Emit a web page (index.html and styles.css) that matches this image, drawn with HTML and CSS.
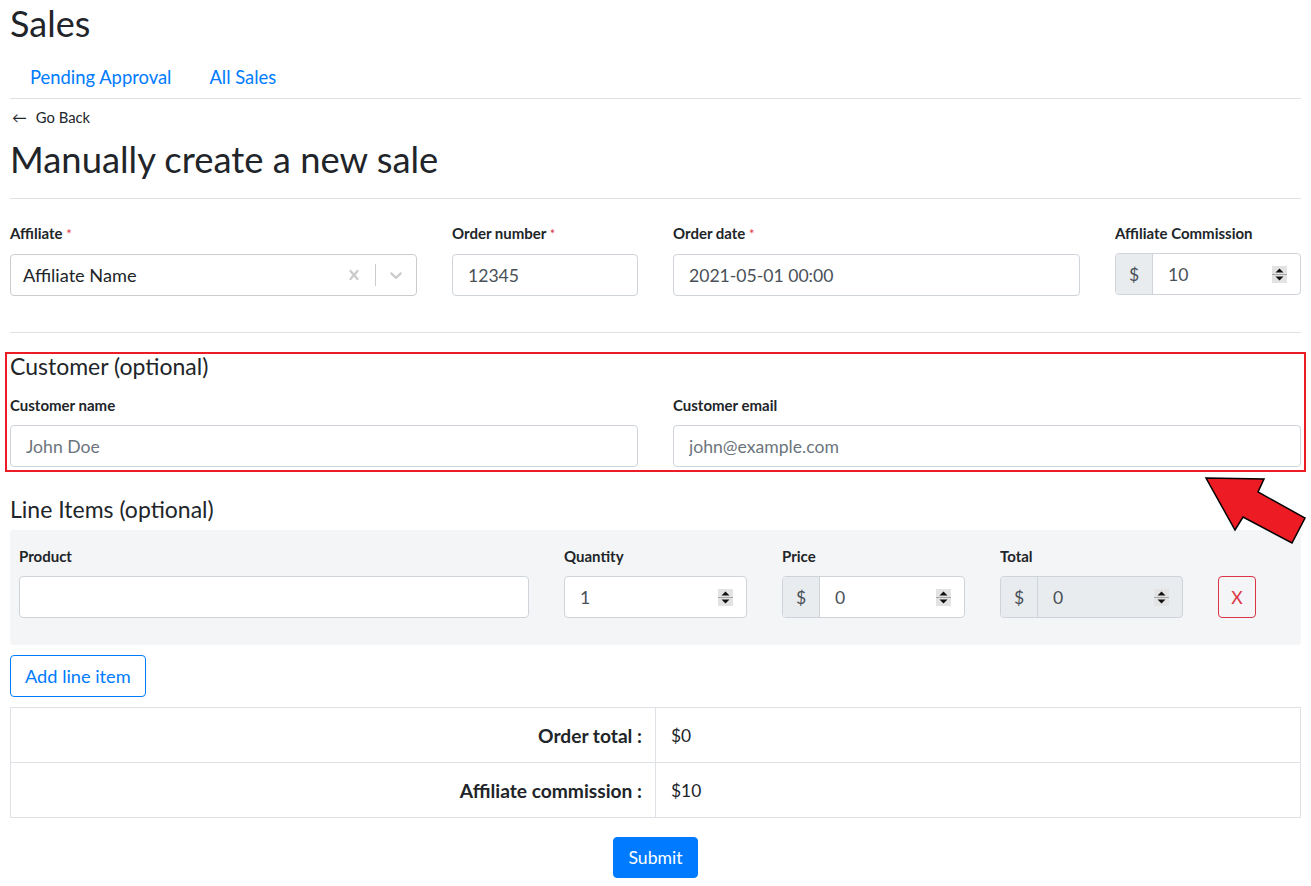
FILE: index.html
```html
<!DOCTYPE html>
<html lang="en">
<head>
<meta charset="utf-8">
<title>Sales</title>
<link rel="stylesheet" href="styles.css">
</head>
<body>
<h1 class="page-title">Sales</h1>
<nav class="tabs">
  <a class="tab" href="#">Pending Approval</a>
  <a class="tab" href="#">All Sales</a>
</nav>
<a class="back" href="#"><span class="back-arrow">&larr;</span>Go Back</a>
<h2 class="form-title">Manually create a new sale</h2>
<hr class="rule rule-top">

<div class="grid-top">
  <div class="field">
    <label class="lbl">Affiliate <span class="req">*</span></label>
    <div class="select">
      <span class="select-value">Affiliate Name</span>
      <span class="ind ind-clear">
        <svg width="20" height="20" viewBox="0 0 20 20"><path fill="#cccccc" d="M14.348 14.849c-0.469 0.469-1.229 0.469-1.697 0l-2.651-3.030-2.651 3.029c-0.469 0.469-1.229 0.469-1.697 0-0.469-0.469-0.469-1.229 0-1.697l2.758-3.15-2.759-3.152c-0.469-0.469-0.469-1.228 0-1.697s1.228-0.469 1.697 0l2.652 3.031 2.651-3.031c0.469-0.469 1.228-0.469 1.697 0s0.469 1.229 0 1.697l-2.758 3.152 2.758 3.15c0.469 0.469 0.469 1.229 0 1.698z"/></svg>
      </span>
      <span class="sep"></span>
      <span class="ind ind-drop">
        <svg width="20" height="20" viewBox="0 0 20 20"><path fill="#cccccc" d="M4.516 7.548c0.436-0.446 1.043-0.481 1.576 0l3.908 3.747 3.908-3.747c0.533-0.481 1.141-0.446 1.574 0 0.436 0.445 0.408 1.197 0 1.615-0.406 0.418-4.695 4.502-4.695 4.502-0.217 0.223-0.502 0.335-0.787 0.335s-0.57-0.112-0.789-0.335c0 0-4.287-4.084-4.695-4.502s-0.436-1.170 0-1.615z"/></svg>
      </span>
    </div>
  </div>
  <div class="field">
    <label class="lbl">Order number <span class="req">*</span></label>
    <input class="input" type="text" value="12345">
  </div>
  <div class="field">
    <label class="lbl">Order date <span class="req">*</span></label>
    <input class="input" type="text" value="2021-05-01 00:00">
  </div>
  <div class="field">
    <label class="lbl">Affiliate Commission</label>
    <div class="group">
      <span class="addon">$</span>
      <input class="bare" type="text" value="10">
      <svg class="spin" width="15" height="17" viewBox="0 0 15 17"><rect x="0" y="0" width="15" height="17" fill="#e3e3e3"/><rect x="0" y="8" width="15" height="1" fill="#a6a6a6"/><polygon points="3.5,6.5 11.5,6.5 7.5,2.5" fill="#111"/><polygon points="3.5,10.5 11.5,10.5 7.5,14.5" fill="#111"/></svg>
    </div>
  </div>
</div>

<hr class="rule rule-mid">

<section class="customer">
  <h3 class="section-title">Customer (optional)</h3>
  <div class="grid-two">
    <div class="field">
      <label class="lbl">Customer name</label>
      <input class="input" type="text" placeholder="John Doe">
    </div>
    <div class="field">
      <label class="lbl">Customer email</label>
      <input class="input" type="text" placeholder="john@example.com">
    </div>
  </div>
</section>

<h3 class="section-title items-title">Line Items (optional)</h3>
<div class="items">
  <div class="field">
    <label class="lbl">Product</label>
    <input class="input" type="text">
  </div>
  <div class="field">
    <label class="lbl">Quantity</label>
    <div class="group">
      <input class="bare" type="text" value="1">
      <svg class="spin" width="15" height="17" viewBox="0 0 15 17"><rect x="0" y="0" width="15" height="17" fill="#e3e3e3"/><rect x="0" y="8" width="15" height="1" fill="#a6a6a6"/><polygon points="3.5,6.5 11.5,6.5 7.5,2.5" fill="#111"/><polygon points="3.5,10.5 11.5,10.5 7.5,14.5" fill="#111"/></svg>
    </div>
  </div>
  <div class="field">
    <label class="lbl">Price</label>
    <div class="group">
      <span class="addon">$</span>
      <input class="bare" type="text" value="0">
      <svg class="spin" width="15" height="17" viewBox="0 0 15 17"><rect x="0" y="0" width="15" height="17" fill="#e3e3e3"/><rect x="0" y="8" width="15" height="1" fill="#a6a6a6"/><polygon points="3.5,6.5 11.5,6.5 7.5,2.5" fill="#111"/><polygon points="3.5,10.5 11.5,10.5 7.5,14.5" fill="#111"/></svg>
    </div>
  </div>
  <div class="field">
    <label class="lbl">Total</label>
    <div class="group disabled">
      <span class="addon">$</span>
      <input class="bare" type="text" value="0" disabled>
      <svg class="spin" width="15" height="17" viewBox="0 0 15 17"><rect x="0" y="0" width="15" height="17" fill="#e3e3e3"/><rect x="0" y="8" width="15" height="1" fill="#a6a6a6"/><polygon points="3.5,6.5 11.5,6.5 7.5,2.5" fill="#111"/><polygon points="3.5,10.5 11.5,10.5 7.5,14.5" fill="#111"/></svg>
    </div>
  </div>
  <div class="field field-end">
    <button class="btn-remove" type="button">X</button>
  </div>
</div>

<button class="btn-outline" type="button">Add line item</button>

<table class="totals">
  <tr>
    <th class="t-label">Order total :</th>
    <td class="t-value">$0</td>
  </tr>
  <tr>
    <th class="t-label">Affiliate commission :</th>
    <td class="t-value">$10</td>
  </tr>
</table>

<div class="submit-row">
  <button class="btn-primary" type="submit">Submit</button>
</div>

<svg class="arrow" width="112" height="80" viewBox="0 0 112 80">
  <polygon points="6,6 64,7 58,20 105,46 92,71 43,45 35,58" fill="#ed1c24" stroke="#000" stroke-width="1.5" stroke-linejoin="miter"/>
</svg>
</body>
</html>
```

FILE: styles.css
```css
* { box-sizing: border-box; }

body {
  margin: 0;
  padding: 0 10px;
  position: relative;
  font-family: Lato, "Open Sans", sans-serif;
  color: #212529;
  background: #fff;
}

.page-title {
  margin: 0;
  padding-top: 2px;
  font-size: 36px;
  line-height: 43px;
  font-weight: 400;
}

.tabs {
  display: flex;
  margin-top: 13px;
  border-bottom: 1px solid #dee2e6;
}

.tab {
  padding: 7px 18px 9px 20px;
  font-size: 18.4px;
  line-height: 24px;
  color: #007bff;
  text-decoration: none;
}

.back {
  display: block;
  margin-top: 8px;
  font-size: 14.8px;
  line-height: 21px;
  color: #212529;
  text-decoration: none;
}

.back-arrow {
  display: inline-block;
  margin-left: 2px;
  margin-right: 9px;
}

.form-title {
  margin: 10px 0 0;
  font-size: 36.4px;
  line-height: 43px;
  font-weight: 400;
}

.rule {
  border: 0;
  border-top: 1px solid #dee2e6;
  margin: 0;
}

.rule-top { margin-top: 17px; margin-bottom: 24px; }
.rule-mid { margin-top: 36px; margin-bottom: 19px; }

.grid-top {
  display: grid;
  grid-template-columns: 407px 186px 407px 186px;
  column-gap: 35px;
}

.field {
  display: flex;
  flex-direction: column;
}

.lbl {
  display: block;
  font-size: 15px;
  line-height: 21px;
  font-weight: 700;
  margin-bottom: 9px;
}

.req { color: #dc3545; font-weight: 400; font-size: 13px; }

.input, .select, .group {
  height: 42px;
  border: 1px solid #ced4da;
  border-radius: 4px;
  background: #fff;
  font-family: inherit;
  font-size: 17.6px;
  color: #495057;
}

.input {
  width: 100%;
  padding: 0 15px;
}

.input::placeholder { color: #6c757d; }

.select {
  display: flex;
  align-items: center;
  border-color: #cccccc;
}

.select-value {
  flex: 1;
  padding-left: 12px;
  font-size: 18.2px;
  color: #212529;
}

.ind {
  display: flex;
  align-items: center;
}

.ind-clear { padding: 0 11px; }
.ind-drop { padding: 0 10px; }

.sep {
  width: 1px;
  height: 22px;
  background: #cccccc;
}

.group {
  display: flex;
  align-items: center;
  overflow: hidden;
}

.group.disabled { background: #e9ecef; }

.addon {
  align-self: stretch;
  display: flex;
  align-items: center;
  justify-content: center;
  width: 37px;
  background: #e9ecef;
  border-right: 1px solid #ced4da;
  color: #495057;
}

.bare {
  flex: 1;
  min-width: 0;
  border: 0;
  outline: 0;
  background: transparent;
  padding: 0 15px;
  font-family: inherit;
  font-size: 17.6px;
  color: #495057;
}

.spin {
  flex: none;
  margin-right: 13px;
}

.customer {
  border: 2px solid #ed1c24;
  margin: 0 -5px;
  padding: 0 3px 3px;
}

.section-title {
  margin: 0 0 17px;
  font-size: 23px;
  line-height: 24px;
  font-weight: 400;
}

.grid-two {
  display: grid;
  grid-template-columns: 628px 1fr;
  column-gap: 35px;
}

.items-title {
  margin: 25px 0 9px;
}

.items {
  display: grid;
  grid-template-columns: 510px 183px 183px 183px 1fr;
  column-gap: 35px;
  padding: 16px 9px 27px;
  background: #f4f5f7;
  border-radius: 4px;
}

.field-end { justify-content: flex-end; }

.btn-remove {
  width: 38px;
  height: 42px;
  border: 1px solid #dc3545;
  border-radius: 4px;
  background: transparent;
  color: #dc3545;
  font-family: inherit;
  font-size: 17.6px;
}

.btn-outline {
  display: block;
  margin-top: 10px;
  height: 42px;
  padding: 0 14px;
  border: 1px solid #007bff;
  border-radius: 4px;
  background: #fff;
  color: #007bff;
  font-family: inherit;
  font-size: 18.2px;
}

.totals {
  width: 100%;
  margin-top: 10px;
  border-collapse: collapse;
  font-size: 17.4px;
}

.totals th, .totals td {
  border: 1px solid #dee2e6;
  height: 55px;
  width: 50%;
}

.t-label {
  text-align: right;
  font-weight: 700;
  font-size: 19.2px;
  padding-right: 13px;
}

.t-value {
  text-align: left;
  padding-left: 15px;
}

.submit-row {
  display: flex;
  justify-content: center;
  margin-top: 19px;
}

.btn-primary {
  height: 41px;
  padding: 0 14px;
  border: 1px solid #007bff;
  border-radius: 4px;
  background: #007bff;
  color: #fff;
  font-family: inherit;
  font-size: 17.6px;
}

.arrow {
  position: absolute;
  left: 1200px;
  top: 472px;
}
```
